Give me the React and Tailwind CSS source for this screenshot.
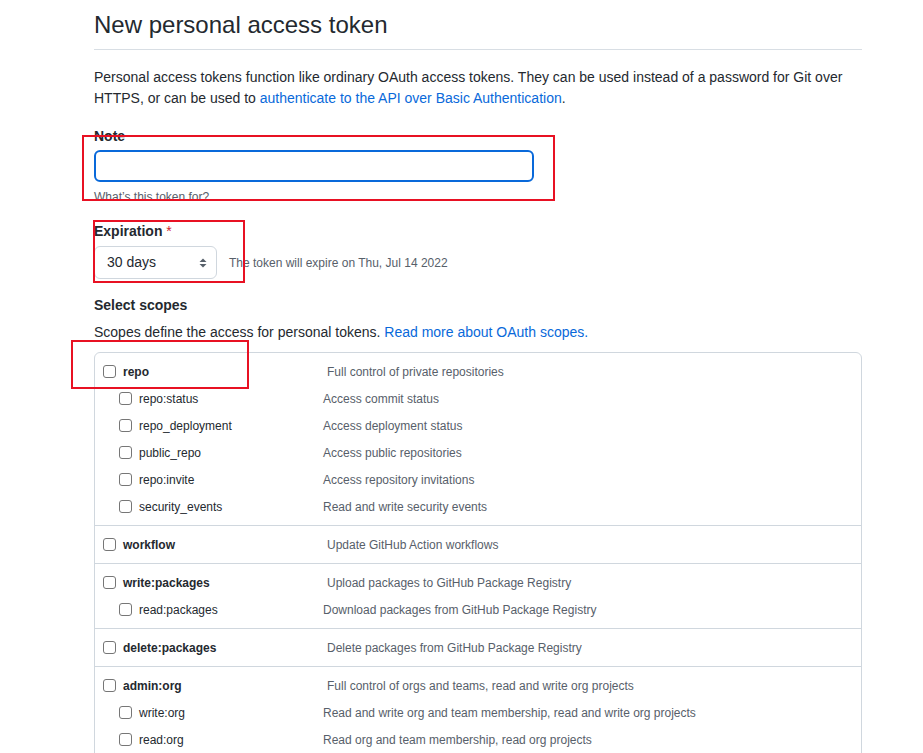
import React from "react";

const font = { fontFamily: '"Liberation Sans", Arial, sans-serif' };

function Box() {
  return <span className="inline-block w-[13px] h-[13px] border border-[#767676] rounded-[3px] bg-white shrink-0" />;
}

function Row({ sub, name, desc }) {
  return (
    <div className="flex items-center h-[27px] text-[12px] whitespace-nowrap">
      {sub ? (
        <div className="flex items-center w-[228px] pl-[24px] gap-[7px] text-[#24292f]">
          <Box />
          <span>{name}</span>
        </div>
      ) : (
        <div className="flex items-center w-[232px] pl-[8px] gap-[7px] font-bold text-[#24292f]">
          <Box />
          <span>{name}</span>
        </div>
      )}
      <span className="text-[#57606a]">{desc}</span>
    </div>
  );
}

const groups = [
  [
    ["repo", "Full control of private repositories"],
    ["repo:status", "Access commit status"],
    ["repo_deployment", "Access deployment status"],
    ["public_repo", "Access public repositories"],
    ["repo:invite", "Access repository invitations"],
    ["security_events", "Read and write security events"],
  ],
  [["workflow", "Update GitHub Action workflows"]],
  [
    ["write:packages", "Upload packages to GitHub Package Registry"],
    ["read:packages", "Download packages from GitHub Package Registry"],
  ],
  [["delete:packages", "Delete packages from GitHub Package Registry"]],
  [
    ["admin:org", "Full control of orgs and teams, read and write org projects"],
    ["write:org", "Read and write org and team membership, read and write org projects"],
    ["read:org", "Read org and team membership, read org projects"],
  ],
];

export default function App() {
  return (
    <div className="relative w-[923px] h-[753px] overflow-hidden bg-white text-[#24292f]" style={font}>
      <div className="ml-[94px] w-[768px]">
        <div className="pt-[10px] pb-[9px] border-b border-[#d8dee4]">
          <h1 className="text-[24px] leading-[30px] font-normal">New personal access token</h1>
        </div>
        <p className="mt-[17px] text-[14px] leading-[21px] whitespace-nowrap">
          Personal access tokens function like ordinary OAuth access tokens. They can be used instead of a password for Git over
          <br />
          HTTPS, or can be used to <span className="text-[#0969da]">authenticate to the API over Basic Authentication</span>.
        </p>
        <div className="mt-[17px] text-[14px] font-bold leading-[20px]">Note</div>
        <div className="mt-[4px] w-[440px] h-[32px] rounded-[6px] border-2 border-[#0969da] bg-white" />
        <div className="mt-[6px] text-[12px] leading-[18px] text-[#57606a]">What’s this token for?</div>
        <div className="mt-[15px] text-[14px] font-bold leading-[20px]">
          Expiration <span className="text-[#cf222e] font-normal">*</span>
        </div>
        <div className="mt-[5px] flex items-center gap-[12px]">
          <div className="w-[123px] h-[33px] rounded-[6px] border border-[#d0d7de] bg-white flex items-center justify-between pl-[12px] pr-[9px] text-[14px]">
            <span>30 days</span>
            <svg width="8" height="12" viewBox="0 0 8 12">
              <path d="M0.5 5 L4 1.5 L7.5 5 Z" fill="#57606a" />
              <path d="M0.5 7 L4 10.5 L7.5 7 Z" fill="#57606a" />
            </svg>
          </div>
          <span className="text-[12px] text-[#57606a]">The token will expire on Thu, Jul 14 2022</span>
        </div>
        <div className="mt-[16px] text-[14px] font-bold leading-[20px]">Select scopes</div>
        <p className="mt-[7px] text-[14px] leading-[21px]">
          Scopes define the access for personal tokens. <span className="text-[#0969da]">Read more about OAuth scopes.</span>
        </p>
        <div className="mt-[9px] border border-[#d0d7de] rounded-[6px]">
          {groups.map((g, gi) => (
            <div key={gi} className={"py-[5px] " + (gi > 0 ? "border-t border-[#d0d7de]" : "")}>
              {g.map(([n, d], ri) => (
                <Row key={n} sub={ri > 0} name={n} desc={d} />
              ))}
            </div>
          ))}
        </div>
      </div>
      <div className="absolute left-[82px] top-[135px] w-[473px] h-[66px] border-2 border-[#e81123]" />
      <div className="absolute left-[93px] top-[220px] w-[152px] h-[63px] border-2 border-[#e81123]" />
      <div className="absolute left-[71px] top-[340px] w-[178px] h-[49px] border-2 border-[#e81123]" />
    </div>
  );
}
